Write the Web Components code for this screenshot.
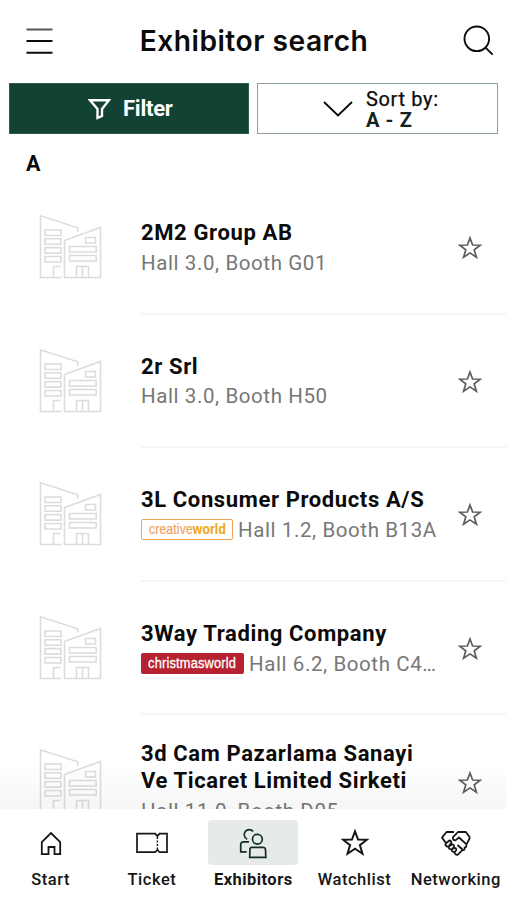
<!DOCTYPE html>
<html lang="en"><head><meta charset="utf-8"><title>Exhibitor search</title>
<style>html,body{margin:0;background:#fff}body{font-family:Roboto,"Liberation Sans",sans-serif;color:#0b0b0b}</style></head>
<body><exhibitor-app></exhibitor-app>
<script>
const base='<style>*{box-sizing:border-box}:host{box-sizing:border-box}svg{display:block;fill:none;stroke:currentColor}</style>';
const define=(name,html)=>customElements.define(name,class extends HTMLElement{
  constructor(){super();this.attachShadow({mode:'open'}).innerHTML=base+(typeof html==='function'?html(this):html);}
});
const star=(s,w)=>`<svg width="${s}" height="${s}" viewBox="0 0 24 24" stroke-width="${w}"><path d="M12 2l2.6 7 7.6.2-6 4.6 2.2 7.4L12 16.9l-6.4 4.3 2.2-7.4-6-4.6L9.4 9z"/></svg>`;
const icons={
  home:'<svg width="24" height="26" viewBox="0 0 24 26" stroke-width="1.8"><path d="M2.8 24.2V12.2L12 3l9.2 9.2v12h-5.7V17h-6v7.2z"/></svg>',
  ticket:'<svg width="34" height="24" viewBox="0 0 34 24" stroke-width="1.7"><path d="M2 2.6h18.2l2.2 2.5 2.2-2.5H32v18.6h-7.4l-2.2-2.5-2.2 2.5H2z"/><path d="M22.4 6v12" stroke-width="1.4" stroke-dasharray="2 1.5"/></svg>',
  people:'<svg width="28" height="32" viewBox="0 0 28 32" stroke-width="1.7"><path d="M8.2 12.2A5 5 0 1 1 14.2 4.6M10 14.8H4.5q-2.8 0-2.8 2.8v7.2h6"/><circle cx="18.4" cy="12.2" r="4.9"/><path d="M12.7 20.3h11.2q2.3 0 2.6 2.2l.3 7.8H10.7l.2-7.8q.2-2.2 1.8-2.2z"/></svg>',
  star:star(28,1.7),
  hands:'<svg width="32" height="28" viewBox="0 0 32 28" stroke-width="1.8" stroke-linejoin="round"><path d="M14 3H6.5L2 8.6l4 5.4q-1.2 1.5.3 3 1.2 1 2.5.6-.5 2.6 2.9 2.9-.2 2.6 2.9 2.6 0 2.8 3 2.7l4.8-4.6q2.6 0 2.2-2.6 2.3-.4 1.6-2.7M30 8.6L25.8 3H18l-5 5.2q-.5 3.2 2.4 3.2L19 8.5l7.5 6.9L30 8.6M6.3 14l3-2.5q2.3 0 2 2.2l-2.5 3.9 3.2-2.2q2.4 0 2 2.3l-2.3 2.8 2.5-1.5q2.4-.2 2 2.2l-1.6 2M17.500 16l5 4.500"/></svg>'
};
define('app-header',`<style>:host{display:flex;height:83px;align-items:center;justify-content:space-between;padding:0 12px 0 26px}
h1{margin:0;font:600 28.2px/34px Inter,Roboto,sans-serif;letter-spacing:.5px;padding:0 7px 2px 0}svg{position:relative;top:-1px}</style>
<svg width="27" height="28" viewBox="0 0 27 28" stroke-width="2"><path d="M.5 2.5h26" stroke="#555"/><path d="M.5 14h26M.5 25.8h26"/></svg>
<h1><slot></slot></h1><svg width="32" height="32" viewBox="0 0 32 32" stroke-width="1.9"><circle cx="14.8" cy="13.8" r="12.3"/><path d="M23.6 22.6l7 7"/></svg>`);
define('filter-button',`<style>:host{display:flex;width:240px;align-items:center;height:51px;background:#114234;color:#fff;border:1px solid #31594d;padding-left:78px;gap:12px;font-weight:700;font-size:22px;letter-spacing:-.25px}</style>
<svg width="23" height="22" viewBox="0 0 23 22" stroke-width="2.4" stroke="#f2f3ee"><path d="M2 2.2h19l-7 8.8v7l-4.5 2V11z"/></svg><slot></slot>`);
define('sort-button',`<style>:host{display:flex;width:241px;align-items:center;height:51px;border:1px solid #8da19b;padding-left:65px;gap:13px;font-size:20px}
div{display:grid;padding-top:2px}.a,.b{display:block;line-height:21px}.a{letter-spacing:.65px;-webkit-text-stroke:.25px}.b{font-weight:700;letter-spacing:.6px;color:#10231d}</style>
<svg width="30" height="18" viewBox="0 0 30 18" stroke-width="1.9"><path d="M1 2l14 13.5L29 2"/></svg><div><span class="a"><slot></slot></span><span class="b"><slot name="order"></slot></span></div>`);
define('fair-badge',el=>`<style>:host{display:inline-flex;flex:none;height:21px;align-items:center;justify-content:center;border-radius:2px;margin-right:5px;font-family:"Liberation Sans",sans-serif;letter-spacing:.2px}
:host([kind=creative]){width:92px;border:1px solid #eea354}:host([kind=christmas]){width:103px;background:#b72231;color:#fff}
.t{display:block;font-size:14px;line-height:19px;white-space:nowrap;transform:scaleX(var(--sx))}
:host([kind=creative]) .t{--sx:.865;color:#f0a05c;-webkit-text-stroke:.2px}:host([kind=christmas]) .t{--sx:.915;-webkit-text-stroke:.3px}b{color:#f4a81d}</style><span class="t"><slot></slot>${el.getAttribute('kind')==='creative'?'<b>world</b>':''}</span>`);
define('exhibitor-row',`<style>:host{display:grid;grid-template-columns:141px 1fr;height:133.6px}
.pic{padding:33px 0 0 39px;color:#dcdcdc}.main{display:grid;grid-template-columns:298px 1fr;border-bottom:2px solid #f5f5f5;align-items:center}
.name{font-size:22px;font-weight:700;line-height:27px;letter-spacing:.62px;padding-top:3px}
.place{display:flex;align-items:center;font-size:20.5px;line-height:30px;height:31px;padding-top:2px;color:#777;letter-spacing:.6px}
.place span{overflow:hidden;text-overflow:ellipsis;white-space:nowrap}.star{padding:3px 0 0 19px;color:#5d5d5d}</style>
<div class="pic"><svg width="64" height="66" viewBox="0 0 64 66" stroke-width="1.6"><path d="M22.5 63.5H1.5V1.8l37.2 12v4M21.5 52.5h-7v11M25.5 63.5v-37l36-13v50z"/><path d="M6 16h16v5.5H6zM6 24.7h16v5.5H6zM6 33.6h16v5.5H6zM6 42.5h16V48H6zM46.5 23.5h10V29h-10zM30.5 32.5h26.7V38H30.5zM30.5 41.5h26.7V47H30.5zM37.5 63.5v-11h12v11M43.5 52.5v11"/></svg></div>
<div class="main"><div><div class="name"><slot></slot></div><div class="place"><slot name="badge"></slot><span><slot name="place"></slot></span></div></div><div class="star">${star(24,1.7)}</div></div>`);
define('tab-item',el=>`<style>:host{display:flex;flex-direction:column;align-items:center;font-size:16.5px;font-weight:500;letter-spacing:.55px;white-space:nowrap;color:#161616}
:host([active]){font-weight:700;letter-spacing:.45px}i{display:flex;width:90px;height:45px;border-radius:4px;align-items:center;justify-content:center;margin:11px 0 4px}
:host([active]) i{background:#e6ebe9;color:#102d26}span{line-height:21px}</style><i>${icons[el.getAttribute('icon')]}</i><span><slot></slot></span>`);
define('tab-bar',`<style>:host{display:grid;grid-template-columns:repeat(5,101.3px);height:91px;background:#fff;flex:none;overflow:hidden}</style><slot></slot>`);
define('exhibitor-app',`<style>:host{display:flex;flex-direction:column;height:900px;width:506px;overflow:hidden}
.actions{display:flex;gap:8px;padding:0 8px 0 9px}h2{margin:0;height:47px;padding:18px 0 0 26px;font-size:21.5px;line-height:24px;font-weight:700}
.list{flex:1;overflow:hidden;position:relative}.list:after{content:"";position:absolute;inset:auto 0 0;height:48px;background:linear-gradient(#0000,rgba(0,0,0,.035))}</style>
<app-header>Exhibitor search</app-header><div class="actions"><filter-button>Filter</filter-button><sort-button>Sort by:<span slot="order">A - Z</span></sort-button></div><h2>A</h2>
<div class="list">
<exhibitor-row>2M2 Group AB<span slot="place">Hall 3.0, Booth G01</span></exhibitor-row>
<exhibitor-row>2r Srl<span slot="place">Hall 3.0, Booth H50</span></exhibitor-row>
<exhibitor-row>3L Consumer Products A/S<fair-badge slot="badge" kind="creative">creative</fair-badge><span slot="place">Hall 1.2, Booth B13A</span></exhibitor-row>
<exhibitor-row>3Way Trading Company<fair-badge slot="badge" kind="christmas">christmasworld</fair-badge><span slot="place">Hall 6.2, Booth C4…</span></exhibitor-row>
<exhibitor-row>3d Cam Pazarlama Sanayi<br>Ve Ticaret Limited Sirketi<span slot="place">Hall 11.0, Booth D05</span></exhibitor-row>
</div>
<tab-bar><tab-item icon="home">Start</tab-item><tab-item icon="ticket">Ticket</tab-item><tab-item icon="people" active>Exhibitors</tab-item><tab-item icon="star">Watchlist</tab-item><tab-item icon="hands">Networking</tab-item></tab-bar>`);
</script></body></html>
